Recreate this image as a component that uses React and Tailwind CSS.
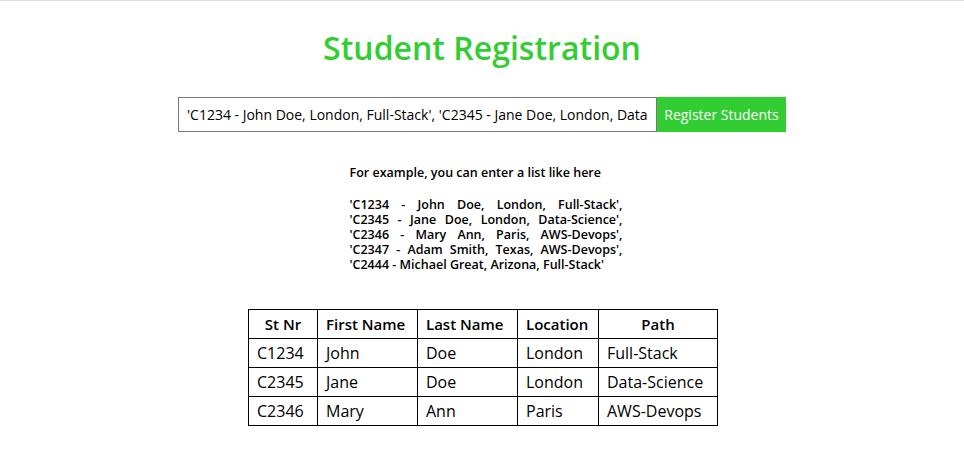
import React, { useState } from 'react';

const students = [
  { nr: 'C1234', first: 'John', last: 'Doe', location: 'London', path: 'Full-Stack' },
  { nr: 'C2345', first: 'Jane', last: 'Doe', location: 'London', path: 'Data-Science' },
  { nr: 'C2346', first: 'Mary', last: 'Ann', location: 'Paris', path: 'AWS-Devops' },
];

const exampleLines = [
  "'C1234 - John Doe, London, Full-Stack',",
  "'C2345 - Jane Doe, London, Data-Science',",
  "'C2346 - Mary Ann, Paris, AWS-Devops',",
  "'C2347 - Adam Smith, Texas, AWS-Devops',",
];

export default function App() {
  const [value, setValue] = useState(
    "'C1234 - John Doe, London, Full-Stack', 'C2345 - Jane Doe, London, Data-Science', 'C2346 - Mary Ann, Paris, AWS-Devops'"
  );

  return (
    <div className="min-h-[466px] bg-white border-t border-[#dcdcdc] font-['Open_Sans',sans-serif] text-black">
      {/* Title */}
      <h1 className="pt-[27px] text-center text-[32px] leading-[40px] font-semibold text-[#32cd32]">
        Student Registration
      </h1>

      {/* Input row */}
      <div className="mt-[29px] flex justify-center">
        <input
          type="text"
          value={value}
          onChange={(e) => setValue(e.target.value)}
          className="w-[479px] h-[35px] px-2 border border-[#767676] text-[14px] text-black outline-none"
        />
        <button className="h-[35px] w-[129px] bg-[#32cd32] text-white text-[14px]">
          Register Students
        </button>
      </div>

      {/* Example */}
      <div className="mt-[33px] flex justify-center">
        <div className="w-[273px] ml-[8px] text-[12.5px] leading-[15px] font-semibold">
          <p>For example, you can enter a list like here</p>
          <div className="mt-[17px]">
            {exampleLines.map((line) => (
              <p key={line} className="text-justify [text-align-last:justify]">{line}</p>
            ))}
            <p>'C2444 - Michael Great, Arizona, Full-Stack'</p>
          </div>
        </div>
      </div>

      {/* Table */}
      <div className="mt-[37px] flex justify-center">
        <table className="ml-[2px] border-collapse text-[16px] leading-[20px]">
          <thead>
            <tr className="h-[29px] text-[15px] whitespace-nowrap">
              <th className="w-[69px] border border-black px-2 font-semibold text-center">St Nr</th>
              <th className="w-[100px] border border-black px-2 font-semibold text-left">First Name</th>
              <th className="w-[100px] border border-black px-2 font-semibold text-left">Last Name</th>
              <th className="w-[81px] border border-black px-2 font-semibold text-left">Location</th>
              <th className="w-[119px] border border-black px-2 font-semibold text-center">Path</th>
            </tr>
          </thead>
          <tbody>
            {students.map((s) => (
              <tr key={s.nr} className="h-[29px] whitespace-nowrap">
                <td className="border border-black px-2">{s.nr}</td>
                <td className="border border-black px-2">{s.first}</td>
                <td className="border border-black px-2">{s.last}</td>
                <td className="border border-black px-2">{s.location}</td>
                <td className="border border-black px-2">{s.path}</td>
              </tr>
            ))}
          </tbody>
        </table>
      </div>
    </div>
  );
}
